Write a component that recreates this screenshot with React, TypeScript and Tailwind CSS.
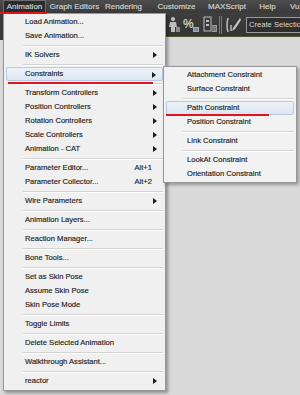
import React from 'react';

type Item = { label: string; sub?: boolean; key?: string; active?: boolean } | 'sep';

const mainItems: Item[] = [
  { label: 'Load Animation...' },
  { label: 'Save Animation...' },
  'sep',
  { label: 'IK Solvers', sub: true },
  'sep',
  { label: 'Constraints', sub: true, active: true },
  'sep',
  { label: 'Transform Controllers', sub: true },
  { label: 'Position Controllers', sub: true },
  { label: 'Rotation Controllers', sub: true },
  { label: 'Scale Controllers', sub: true },
  { label: 'Animation - CAT', sub: true },
  'sep',
  { label: 'Parameter Editor...', key: 'Alt+1' },
  { label: 'Parameter Collector...', key: 'Alt+2' },
  'sep',
  { label: 'Wire Parameters', sub: true },
  'sep',
  { label: 'Animation Layers...' },
  'sep',
  { label: 'Reaction Manager...' },
  'sep',
  { label: 'Bone Tools...' },
  'sep',
  { label: 'Set as Skin Pose' },
  { label: 'Assume Skin Pose' },
  { label: 'Skin Pose Mode' },
  'sep',
  { label: 'Toggle Limits' },
  'sep',
  { label: 'Delete Selected Animation' },
  'sep',
  { label: 'Walkthrough Assistant...' },
  'sep',
  { label: 'reactor', sub: true },
];

const subItems: Item[] = [
  { label: 'Attachment Constraint' },
  { label: 'Surface Constraint' },
  'sep',
  { label: 'Path Constraint', active: true },
  { label: 'Position Constraint' },
  'sep',
  { label: 'Link Constraint' },
  'sep',
  { label: 'LookAt Constraint' },
  { label: 'Orientation Constraint' },
];

const topMenus = [
  { label: 'Animation', w: 'w-[43px]' },
  { label: 'Graph Editors', w: 'w-[57px]' },
  { label: 'Rendering', w: 'w-[41px]' },
  { label: 'Customize', w: 'w-[65px]' },
  { label: 'MAXScript', w: 'w-[36px]' },
  { label: 'Help', w: 'w-[45px]' },
];

function Arrow() {
  return (
    <svg width="4" height="6" viewBox="0 0 4 6" className="absolute right-[6px] top-[4px]">
      <path d="M0 0 L4 3 L0 6 Z" fill="#1a1a1a" />
    </svg>
  );
}

function MenuList({ items, indent }: { items: Item[]; indent: string }) {
  return (
    <>
      {items.map((it, i) =>
        it === 'sep' ? (
          <div key={i} className="h-[5px] flex flex-col justify-center pl-[19px] pr-[2px]">
            <div className="h-px bg-[#d3d3d3]" />
            <div className="h-px bg-white" />
          </div>
        ) : (
          <div
            key={i}
            className={`relative h-[14px] flex items-center ${indent} mx-[2px] ${
              it.active ? 'bg-gradient-to-b from-[#eef3fa] to-[#dce5f1] border border-[#b9cbe3] rounded-[2px]' : ''
            }`}
          >
            <span className={it.active ? '-ml-px' : ''}>{it.label}</span>
            {it.key && <span className="absolute right-[11px]">{it.key}</span>}
            {it.sub && <Arrow />}
          </div>
        )
      )}
    </>
  );
}

export default function App() {
  return (
    <div
      className="relative w-[300px] h-[395px] overflow-hidden bg-[#d9d9d9]"
      style={{ fontFamily: '"Liberation Sans", Arial, sans-serif' }}
    >
      {/* menu bar */}
      <div className="h-[13px] bg-gradient-to-b from-[#4d4d4d] to-[#3a3a3a] flex items-center pl-[3px] text-[8px] text-[#d6d6d6] [-webkit-text-stroke:0.15px_#d6d6d6] whitespace-nowrap">
        {topMenus.map((m, i) => (
          <div
            key={m.label}
            className={`${m.w} h-[13px] flex items-center justify-center shrink-0 ${
              i === 0 ? 'bg-[#2b2b2b] border-x border-t border-[#6b6b6b]' : ''
            }`}
          >
            {m.label}
          </div>
        ))}
        <span>Vu</span>
      </div>

      {/* toolbar */}
      <div className="h-[24px] flex items-stretch border-b border-[#55532f]">
        <div className="w-[3px] h-[27px] bg-[#3a3a3a] shrink-0" />
        <div className="flex-1 bg-gradient-to-b from-[#3e3e3e] to-[#353535] flex items-center pl-[164px]">
          <svg width="14" height="17" viewBox="0 0 14 17" className="shrink-0">
            <circle cx="6" cy="3" r="2" fill="#c8c8c8" />
            <path d="M3 6 L9 6 L10 11 L8 11 L8 16 L4 16 L4 11 L2 11 Z" fill="#bdbdbd" />
            <rect x="9" y="11" width="4" height="5" fill="#8a8a8a" />
          </svg>
          <div className="relative w-[16px] h-[17px] ml-[2px] shrink-0">
            <span className="absolute left-0 top-[-1px] text-[12px] font-bold text-[#c8c8c8]">%</span>
            <div className="absolute right-0 bottom-[1px] w-[6px] h-[5px] bg-[#7d8a99] border border-[#aaa]" />
          </div>
          <svg width="15" height="17" viewBox="0 0 15 17" className="ml-[4px] shrink-0">
            <rect x="1" y="1" width="7" height="14" fill="none" stroke="#bdbdbd" strokeWidth="1" />
            <rect x="3" y="4" width="3" height="2" fill="#bdbdbd" />
            <rect x="3" y="8" width="3" height="2" fill="#bdbdbd" />
            <rect x="9" y="9" width="5" height="7" fill="#9a9a9a" />
            <path d="M10 10 V15 M12 10 V15" stroke="#555" strokeWidth="1" />
          </svg>
          <div className="w-[3px] h-[18px] border-x border-[#7a7a7a] ml-[1px] shrink-0" />
          <svg width="17" height="18" viewBox="0 0 17 18" className="ml-[3px] shrink-0">
            <path d="M3 2 Q1 9 3 16" fill="none" stroke="#bdbdbd" strokeWidth="1.5" />
            <path d="M15 2 L8 12 L7 15 L10 13 L16 4 Z" fill="#c8c8c8" />
            <path d="M6 9 L6 15" stroke="#bdbdbd" strokeWidth="1.5" />
          </svg>
          <div className="ml-[4px] flex-1 h-[16px] border border-r-0 border-[#9a9a9a] bg-[#2e2e2e] flex items-center pl-[2px] text-[7.6px] text-[#d8d8d8] whitespace-nowrap overflow-hidden">
            Create Selection Se
          </div>
        </div>
      </div>

      {/* main menu */}
      <div className="absolute left-[3px] top-[13px] w-[163px] bg-[#f0f0f0] border border-[#979797] pt-px pb-[2px] text-[7.6px] text-[#222] [-webkit-text-stroke:0.15px_#222] shadow-[2px_2px_3px_rgba(0,0,0,0.35)]">
        <MenuList items={mainItems} indent="pl-[19px]" />
      </div>

      {/* submenu */}
      <div className="absolute left-[163px] top-[66px] w-[134px] bg-[#f2f2f2] border border-[#979797] py-[1px] text-[7.6px] text-[#222] [-webkit-text-stroke:0.15px_#222] shadow-[2px_2px_3px_rgba(0,0,0,0.3)]">
        <MenuList items={subItems} indent="pl-[21px]" />
      </div>

      {/* red annotation marks */}
      <div className="absolute left-0 top-[12px] w-[47px] h-[2px] bg-[#e0141c]" />
      <div className="absolute left-[8px] top-[82px] w-[145px] h-[2px] bg-[#e0141c]" />
      <div className="absolute left-[166px] top-[114px] w-[103px] h-[2px] bg-[#e0141c]" />
    </div>
  );
}
